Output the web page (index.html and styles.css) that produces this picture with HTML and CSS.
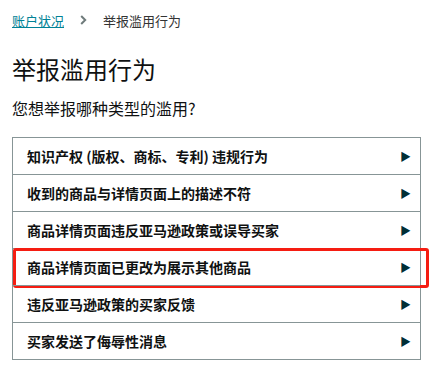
FILE: index.html
```html
<!DOCTYPE html>
<html lang="zh-CN">
<head>
    <meta charset="UTF-8">
    <meta name="viewport" content="width=device-width, initial-scale=1.0">
    <title>举报滥用行为</title>
    <link rel="stylesheet" href="styles.css">
</head>
<body>
    <div class="page">
        <div class="breadcrumb">
            <a href="#" class="crumb-link">账户状况</a>
            <svg class="crumb-sep" width="7" height="10" viewBox="0 0 7 10"><path d="M1.2 1 L5.2 5 L1.2 9" fill="none" stroke="#6f7b7b" stroke-width="2"/></svg>
            <span class="crumb-current">举报滥用行为</span>
        </div>

        <h1 class="title">举报滥用行为</h1>
        <p class="question">您想举报哪种类型的滥用?</p>

        <ul class="options">
            <li class="option"><span>知识产权 (版权、商标、专利) 违规行为</span><span class="arrow">▶</span></li>
            <li class="option"><span>收到的商品与详情页面上的描述不符</span><span class="arrow">▶</span></li>
            <li class="option"><span>商品详情页面违反亚马逊政策或误导买家</span><span class="arrow">▶</span></li>
            <li class="option selected"><span>商品详情页面已更改为展示其他商品</span><span class="arrow">▶</span></li>
            <li class="option"><span>违反亚马逊政策的买家反馈</span><span class="arrow">▶</span></li>
            <li class="option"><span>买家发送了侮辱性消息</span><span class="arrow">▶</span></li>
        </ul>
    </div>
</body>
</html>
```

FILE: styles.css
```css
* {
    margin: 0;
    padding: 0;
    box-sizing: border-box;
}

body {
    font-family: "Noto Sans CJK SC", "Noto Sans", sans-serif;
    background: #fff;
    color: #0f1111;
}

.page {
    padding: 10px 0 0 12px;
}

.breadcrumb {
    display: flex;
    align-items: center;
    height: 20px;
    font-size: 13px;
}

.crumb-link {
    color: #008296;
    text-decoration: underline;
}

.crumb-sep {
    margin: 0 16px 0 16px;
}

.crumb-current {
    color: #333;
}

.title {
    margin-top: 23px;
    font-size: 24px;
    line-height: 32px;
    font-weight: normal;
    color: #0f1111;
}

.question {
    margin-top: 12px;
    font-size: 16px;
    line-height: 22px;
    color: #0f1111;
}

.options {
    list-style: none;
    margin-top: 18px;
    width: 409px;
    border: 1px solid #879596;
}

.option {
    position: relative;
    display: flex;
    align-items: center;
    justify-content: space-between;
    height: 37px;
    padding: 0 9px 0 14px;
    border-top: 1px solid #879596;
    font-size: 14px;
    font-weight: bold;
}

.option:first-child {
    height: 36px;
    border-top: none;
}

.arrow {
    font-size: 11px;
    color: #002f36;
    font-weight: normal;
}

.selected::after {
    content: "";
    position: absolute;
    left: 0;
    top: -1px;
    width: 410px;
    height: 34px;
    border: 3px solid #f51d12;
    border-radius: 3px;
}
```
